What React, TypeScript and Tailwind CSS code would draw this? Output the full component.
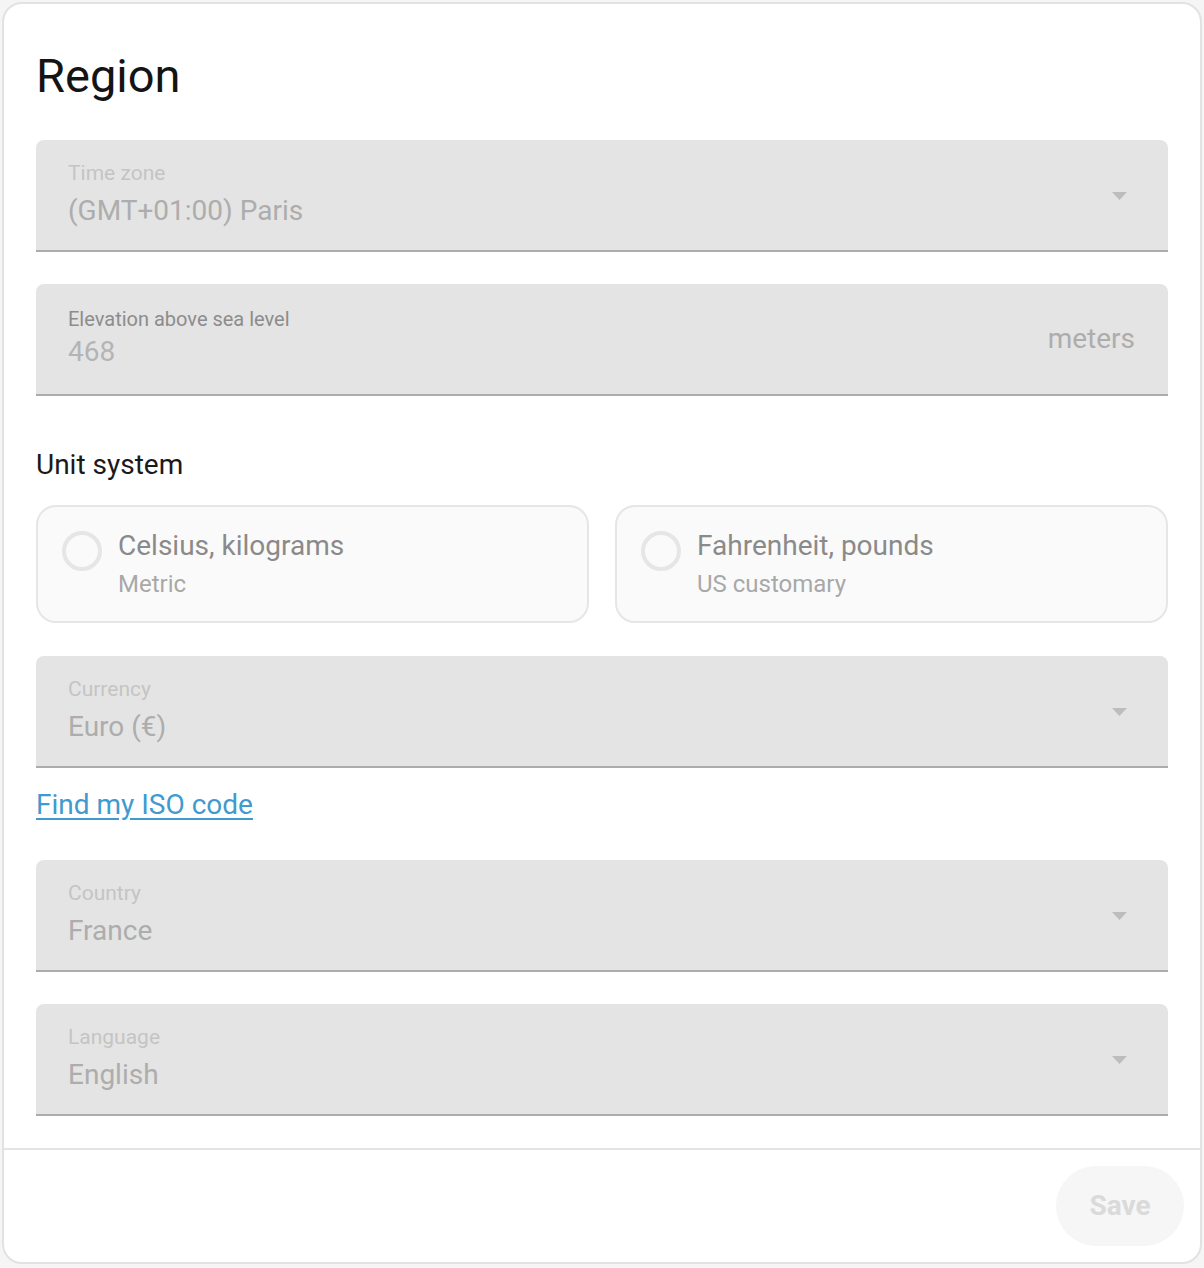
import { ReactNode } from "react";

function Arrow() {
  return (
    <svg
      className="absolute right-[41px] top-[52px]"
      width="15"
      height="8"
      viewBox="0 0 15 8"
    >
      <path d="M0 0h15L7.5 8z" fill="#bdbdbd" />
    </svg>
  );
}

function SelectField({ label, value }: { label: string; value: string }) {
  return (
    <div className="relative h-[112px] rounded-t-[8px] bg-[#e4e4e4] border-b-2 border-[#acacac] pl-8 pt-[21px]">
      <div className="text-[21px] leading-[24px] text-[#c4c4c4]">{label}</div>
      <div className="mt-[8px] text-[28px] leading-[36px] text-[#adadad]">{value}</div>
      <Arrow />
    </div>
  );
}

function RadioCard({ title, sub }: { title: string; sub: string }) {
  return (
    <div className="flex h-[118px] items-start rounded-[20px] border-2 border-[#e6e6e6] bg-[#fafafa] pl-[24px] pt-[22px]">
      <div className="mt-[2px] h-[40px] w-[40px] shrink-0 rounded-full border-[4px] border-[#e6e6e6]" />
      <div className="ml-[16px] flex flex-col">
        <span className="text-[28px] leading-[34px] text-[#8a8a8a]">{title}</span>
        <span className="mt-[6px] text-[24px] leading-[30px] text-[#a8a8a8]">{sub}</span>
      </div>
    </div>
  );
}

function Section({ children }: { children: ReactNode }) {
  return <div className="flex flex-col">{children}</div>;
}

export default function App() {
  return (
    <div className="min-h-[1268px] bg-[#f5f5f5] p-[2px] font-['Roboto',sans-serif]">
      <div className="flex h-[1262px] w-[1200px] flex-col overflow-hidden rounded-[20px] border-2 border-[#e2e2e2] bg-white">
        <div className="flex-1 px-8 pt-[44px]">
          <h1 className="text-[47px] leading-[56px] text-[#141414]">Region</h1>

          <Section>
            <div className="mt-[36px]">
              <SelectField label="Time zone" value="(GMT+01:00) Paris" />
            </div>

            <div className="relative mt-[32px] h-[112px] rounded-t-[8px] bg-[#e4e4e4] border-b-2 border-[#acacac] pl-8 pt-[23px]">
              <div className="text-[20px] leading-[24px] text-[#8c8c8c]">
                Elevation above sea level
              </div>
              <div className="mt-[3px] text-[28px] leading-[36px] text-[#b4b4b4]">468</div>
              <span className="absolute right-[33px] top-[37px] text-[28px] leading-[36px] text-[#adadad]">
                meters
              </span>
            </div>

            <div className="mt-[51px] text-[28px] leading-[36px] text-[#1a1a1a]">Unit system</div>

            <div className="mt-[22px] grid grid-cols-2 gap-[26px]">
              <RadioCard title="Celsius, kilograms" sub="Metric" />
              <RadioCard title="Fahrenheit, pounds" sub="US customary" />
            </div>

            <div className="mt-[33px]">
              <SelectField label="Currency" value="Euro (€)" />
            </div>

            <a
              href="#"
              className="mt-[19px] self-start text-[28px] leading-[36px] text-[#3f9bcf] underline underline-offset-[4px]"
            >
              Find my ISO code
            </a>

            <div className="mt-[37px]">
              <SelectField label="Country" value="France" />
            </div>

            <div className="mt-[32px]">
              <SelectField label="Language" value="English" />
            </div>
          </Section>
        </div>

        <div className="flex justify-end border-t-2 border-[#e4e4e4] p-4">
          <button className="h-[80px] w-[128px] rounded-full bg-[#f6f6f6] text-[28px] font-bold text-[#dadada]">
            Save
          </button>
        </div>
      </div>
    </div>
  );
}
